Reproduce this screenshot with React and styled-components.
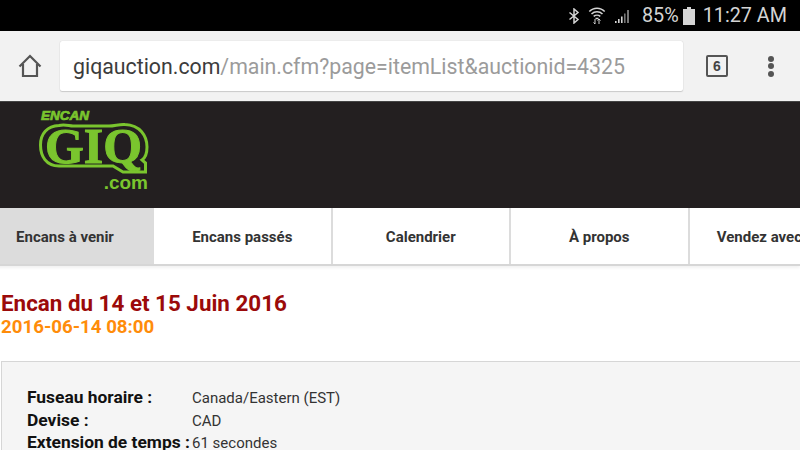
import styled, { createGlobalStyle } from "styled-components";

const GlobalStyle = createGlobalStyle`
  html, body {
    margin: 0;
    padding: 0;
    background: #fff;
  }
  body {
    font-family: Roboto, "Liberation Sans", sans-serif;
    width: 800px;
    height: 450px;
    overflow: hidden;
  }
`;

const StatusBar = styled.div`
  height: 31px;
  background: #000;
  color: #d4d4d4;
  display: flex;
  align-items: center;
  justify-content: flex-end;
  padding-right: 13px;
`;

const StatusText = styled.span`
  font-size: 19.8px;
  line-height: 31px;
  margin-left: ${(p) => p.$gap || 0}px;
`;

const StatusIcon = styled.svg`
  display: block;
  flex: none;
  margin-left: ${(p) => p.$gap || 0}px;
`;

const Toolbar = styled.div`
  height: 70px;
  box-sizing: border-box;
  background: #f2f2f2;
  display: flex;
  align-items: center;
  padding: 0 16px 0 18px;
`;

const HomeIcon = styled.svg`
  display: block;
  flex: none;
  width: 24px;
  height: 24px;
  margin-right: 18px;
`;

const UrlBox = styled.div`
  width: 623px;
  height: 50px;
  box-sizing: border-box;
  flex: none;
  background: #fff;
  border-radius: 2px;
  box-shadow: 0 0 1px #bbb, 0 1px 1px #ccc;
  padding-left: 13px;
  font-size: 21.3px;
  line-height: 52px;
  color: #9b9b9b;
  white-space: nowrap;
`;

const Host = styled.span`
  color: #3c3c3c;
`;

const TabCount = styled.div`
  width: 22px;
  height: 22px;
  box-sizing: border-box;
  flex: none;
  margin-left: 23px;
  border: 2px solid #555;
  border-radius: 2px;
  color: #444;
  font-family: "Liberation Sans", sans-serif;
  font-size: 14px;
  font-weight: 700;
  line-height: 18px;
  text-align: center;
`;

const MenuDots = styled.div`
  display: flex;
  flex-direction: column;
  gap: 1.5px;
  margin-left: 40px;
`;

const Dot = styled.span`
  width: 6px;
  height: 6px;
  border-radius: 50%;
  background: #555;
`;

const Header = styled.div`
  height: 107px;
  box-sizing: border-box;
  background: #231f20;
  padding: 7px 0 0 39px;
  border-top: 1px solid #444;
`;

const LogoSvg = styled.svg`
  display: block;
`;

const Nav = styled.nav`
  height: 58px;
  box-sizing: border-box;
  display: flex;
  margin-left: -24px;
  width: 824px;
  border-bottom: 2px solid #d6d6d6;
  box-shadow: 0 2px 3px rgba(0, 0, 0, 0.06);
  overflow: hidden;
  background: #fff;
`;

const NavItem = styled.a`
  flex: none;
  width: ${(p) => (p.$active ? "178px" : "178.5px")};
  box-sizing: border-box;
  border-right: ${(p) => (p.$active ? "none" : "2px solid #dcdcdc")};
  background: ${(p) => (p.$active ? "#dcdcdc" : "#fff")};
  color: #333;
  font-size: 15px;
  font-weight: 700;
  line-height: 58px;
  text-align: center;
  white-space: nowrap;
`;

const Titles = styled.div`
  padding: 25px 0 0 1px;
  height: 95px;
  box-sizing: border-box;
`;

const Title = styled.h1`
  margin: 0;
  font-size: 22.4px;
  font-weight: 700;
  line-height: 25px;
  color: #9b0a0a;
`;

const DateLine = styled.div`
  font-size: 18.7px;
  font-weight: 700;
  line-height: 23px;
  color: #ff8c0a;
`;

const Panel = styled.section`
  margin-left: 1px;
  height: 89px;
  box-sizing: border-box;
  border-top: 1px solid #d6d6d6;
  border-left: 1px solid #d6d6d6;
  background: #f5f5f5;
  padding: 24px 0 0 25px;
  overflow: hidden;
`;

const InfoRow = styled.div`
  display: grid;
  grid-template-columns: 165px 1fr;
  align-items: baseline;
  height: 22.5px;
  line-height: 22.5px;
  white-space: nowrap;
`;

const Label = styled.span`
  font-size: 17.4px;
  font-weight: 700;
  color: #111;
`;

const Value = styled.span`
  font-size: 15px;
  color: #333;
`;

const tabs = ["Encans à venir", "Encans passés", "Calendrier", "À propos", "Vendez avec nous"];

const infos = [
  ["Fuseau horaire :", "Canada/Eastern (EST)"],
  ["Devise :", "CAD"],
  ["Extension de temps :", "61 secondes"],
];

const Logo = () => (
  <LogoSvg width="112" height="84" viewBox="0 0 112 84">
    <text
      x="2"
      y="11"
      fill="#7ac52e"
      stroke="#7ac52e"
      strokeWidth="0.7"
      fontFamily="'Liberation Sans', sans-serif"
      fontSize="13"
      fontStyle="italic"
      fontWeight="700"
      textLength="48"
      lengthAdjust="spacingAndGlyphs"
    >
      ENCAN
    </text>
    <path
      d="M20 16.5 C26 15 30 17 34 17 H70 C76 17 80 15 86 15.5 C101 16 108 27 108 38 C108 45 106 49 103 51 L106.5 54 V63 H84 L74 57 H20 C7 57 1.5 47 1.5 36 C1.5 25 8 17 20 16.5 Z"
      fill="#231f20"
      stroke="#7ac52e"
      strokeWidth="3"
    />
    <text
      x="6"
      y="54"
      fill="#7ac52e"
      stroke="#7ac52e"
      strokeWidth="1"
      fontFamily="'Liberation Serif', serif"
      fontSize="50"
      fontWeight="700"
      textLength="97"
      lengthAdjust="spacingAndGlyphs"
    >
      GIQ
    </text>
    <text
      x="109"
      y="80"
      textAnchor="end"
      fill="#7ac52e"
      fontFamily="'Liberation Sans', sans-serif"
      fontSize="19"
      fontWeight="700"
    >
      .com
    </text>
  </LogoSvg>
);

export default function App() {
  return (
    <>
      <GlobalStyle />
      <StatusBar>
        <StatusIcon width="12" height="16" viewBox="0 0 12 16" fill="none" stroke="#d4d4d4" strokeWidth="1.5">
          <path d="M1.5 4.5 L10 11.5 L6 15 V1 L10 4.5 L1.5 11.5" />
        </StatusIcon>
        <StatusIcon $gap={8} width="18" height="19" viewBox="0 0 17 19" fill="none" stroke="#d4d4d4" strokeWidth="1.5">
          <path d="M0.8 5.5 C5 1 12 1 16.2 5.5" />
          <path d="M3 8 C6 5 11 5 14 8" />
          <path d="M5.2 10.4 C7 8.8 10 8.8 11.8 10.4" />
          <path d="M7 12.5 H10" />
          <path d="M6.5 13 V18 M5 16.5 L6.5 18 M10.5 18 V13 M9 14.5 L10.5 13 L12 14.5" strokeWidth="1" />
        </StatusIcon>
        <StatusIcon $gap={8} width="17" height="16" viewBox="0 0 17 16" fill="#d4d4d4">
          <path d="M1 13h1.6v2H1zM4 11h1.6v4H4zM7 8.5h1.6V15H7z" />
          <path d="M10 5.5h1.6V15H10zM13 2h2v13h-2z" opacity="0.55" />
        </StatusIcon>
        <StatusText $gap={11}>85%</StatusText>
        <StatusIcon $gap={4} width="12" height="18" viewBox="0 0 12 18" fill="#d4d4d4">
          <path d="M4 0h4v2h4v16H0V2h4z" />
        </StatusIcon>
        <StatusText $gap={8}>11:27 AM</StatusText>
      </StatusBar>

      <Toolbar>
        <HomeIcon viewBox="0 0 24 24" fill="none" stroke="#555" strokeWidth="2.2">
          <path d="M1.5 12.5 L12 2 L22.5 12.5 M5 10 V22 H19 V10" />
        </HomeIcon>
        <UrlBox>
          <Host>giqauction.com</Host>/main.cfm?page=itemList&amp;auctionid=4325
        </UrlBox>
        <TabCount>6</TabCount>
        <MenuDots>
          <Dot />
          <Dot />
          <Dot />
        </MenuDots>
      </Toolbar>

      <Header>
        <Logo />
      </Header>

      <Nav>
        {tabs.map((tab, i) => (
          <NavItem key={tab} $active={i === 0}>
            {tab}
          </NavItem>
        ))}
      </Nav>

      <Titles>
        <Title>Encan du 14 et 15 Juin 2016</Title>
        <DateLine>2016-06-14 08:00</DateLine>
      </Titles>

      <Panel>
        {infos.map(([label, value]) => (
          <InfoRow key={label}>
            <Label>{label}</Label>
            <Value>{value}</Value>
          </InfoRow>
        ))}
      </Panel>
    </>
  );
}
